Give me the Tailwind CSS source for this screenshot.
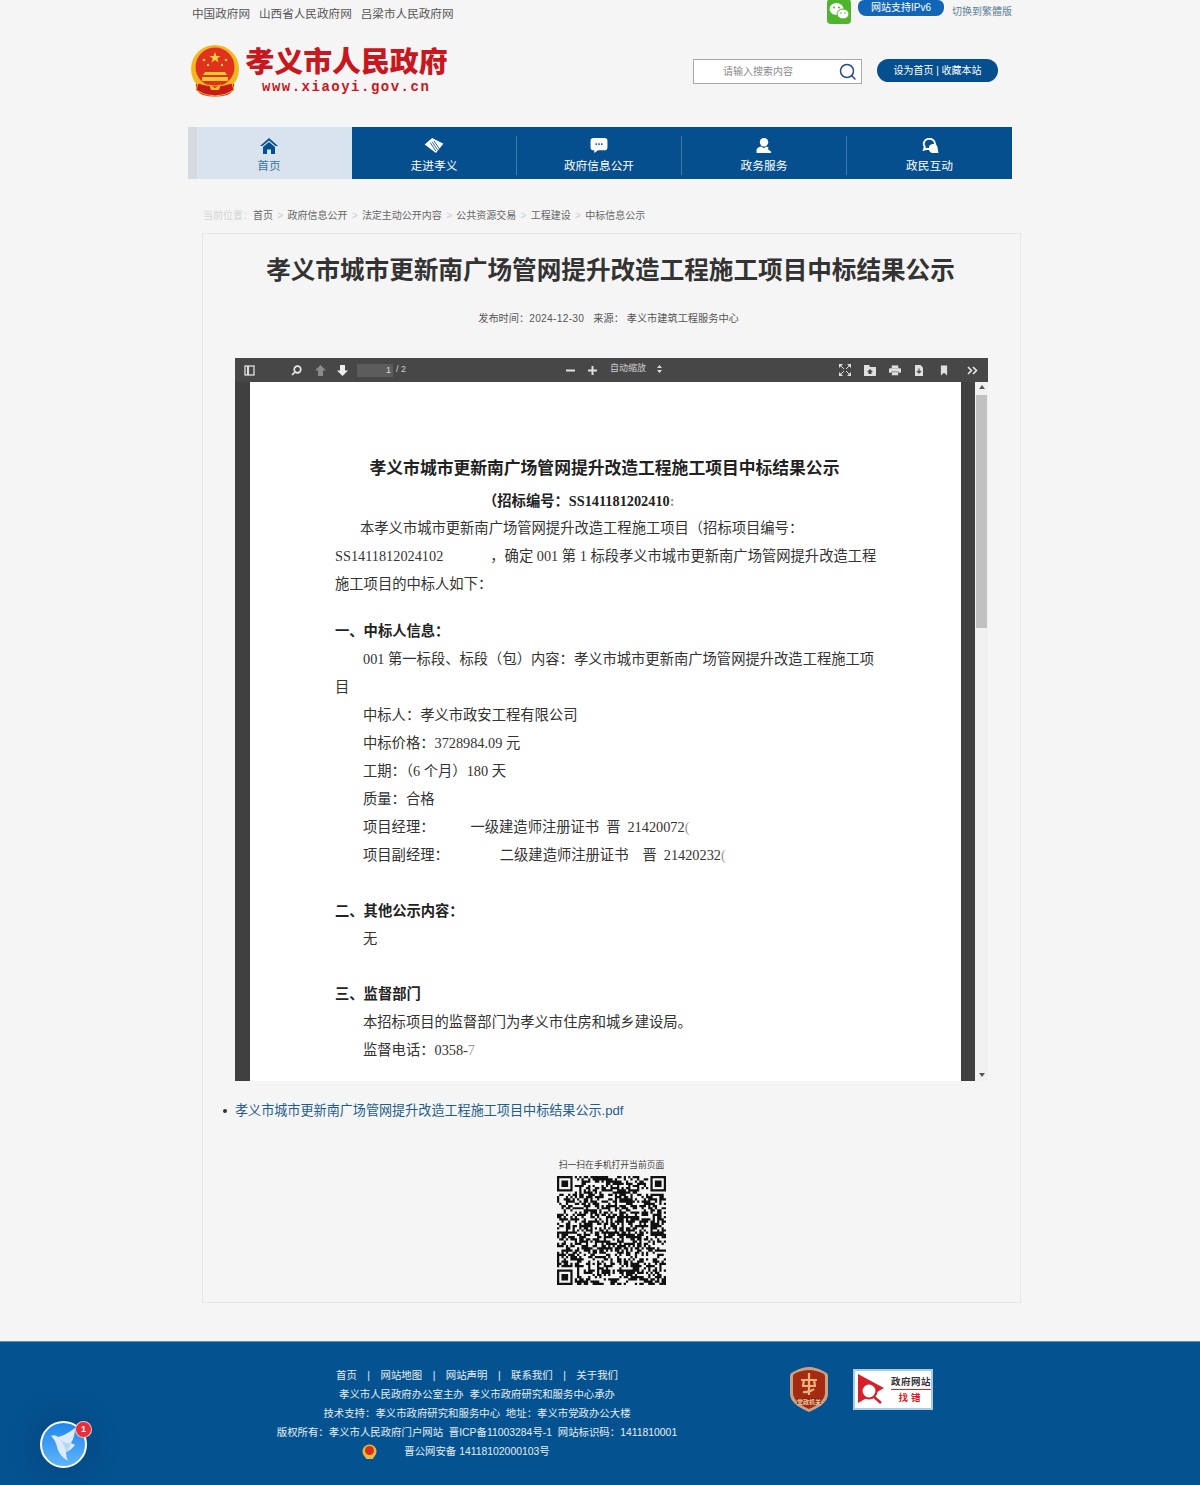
<!DOCTYPE html>
<html lang="zh-CN">
<head>
    <meta charset="UTF-8">
    <title>孝义市人民政府</title>
    <script src="https://cdn.jsdelivr.net/npm/@tailwindcss/browser@4"></script>
</head>
<body class="relative bg-[#f5f5f5] h-[1485px] overflow-hidden font-['Liberation_Sans','Noto_Sans_CJK_SC',sans-serif]">

    <!-- 顶部 -->
    <header class="w-[824px] ml-[188px]">
        <div class="h-[45px] flex items-start">
            <div class="flex gap-[9px] pl-[4px] pt-[6px] text-[11.6px] leading-[16px] text-[#555]">
                <a>中国政府网</a><a>山西省人民政府网</a><a>吕梁市人民政府网</a>
            </div>
            <svg class="ml-auto w-[24px] h-[25px] -mt-px" viewBox="0 0 24 25">
                <rect width="24" height="25" rx="4" fill="#4fb52c"/>
                <ellipse cx="9.5" cy="10" rx="7" ry="6" fill="#fff"/>
                <ellipse cx="16" cy="15" rx="6" ry="5" fill="#fff" stroke="#4fb52c"/>
                <circle cx="7" cy="8.5" r="1" fill="#4fb52c"/><circle cx="12" cy="8.5" r="1" fill="#4fb52c"/>
                <circle cx="14" cy="14" r=".8" fill="#4fb52c"/><circle cx="18" cy="14" r=".8" fill="#4fb52c"/>
            </svg>
            <div class="ml-[7px] w-[86px] h-[16px] rounded-b-[8px] rounded-t-[6px] bg-[#1266b8] text-white text-[10px] leading-[16px] text-center">网站支持IPv6</div>
            <a class="ml-[8px] pt-[5px] text-[10px] leading-[14px] text-[#5d7f97]">切换到繁體版</a>
        </div>

        <div class="h-[82px] flex items-start">
            <svg class="ml-[3px] w-[48px] h-[52px]" viewBox="0 0 48 52">
                <path d="M6 34 Q2 46 12 50 Q24 53 36 50 Q46 46 42 34Z" fill="#c8191c"/>
                <circle cx="24" cy="24" r="24" fill="#f2b91f"/>
                <circle cx="24" cy="22" r="19.5" fill="#e0311f"/>
                <path d="M24 7l1.5 4h4l-3.2 2.4 1.2 4-3.5-2.5-3.5 2.5 1.2-4L18.500 11h4z" fill="#f7d23a"/>
                <circle cx="13" cy="15" r="1.300" fill="#f7d23a"/><circle cx="35" cy="15" r="1.300" fill="#f7d23a"/>
                <circle cx="17" cy="20" r="1.200" fill="#f7d23a"/><circle cx="31" cy="20" r="1.200" fill="#f7d23a"/>
                <path d="M14 27h20l2 3H12zM11 32h26v4H11z" fill="#f7c92e"/>
                <path d="M7 38q8 3 17 3t17-3l2 7q-9 6-19 6t-19-6z" fill="#c8191c" stroke="#f2b91f"/>
                <path d="M18 39l6 4 6-4-2 6h-8z" fill="#f2b91f"/>
            </svg>
            <div class="ml-[6px] text-center">
                <div class="w-[203px] text-[28.9px] leading-[36px] font-black whitespace-nowrap text-[#c9171e] -mt-[1px]">孝义市人民政府</div>
                <div class="pl-[17px] text-left text-[14px] leading-[14px] font-bold tracking-[1.5px] whitespace-nowrap text-[#c9171e] font-['Liberation_Mono',monospace]">www.xiaoyi.gov.cn</div>
            </div>
            <div class="ml-auto mr-[150px] mt-[14px] w-[169px] h-[25px] bg-white border border-[#a9a9a9] flex items-center">
                <span class="ml-[29px] text-[10px] text-[#8a8a8a]">请输入搜索内容</span>
                <svg class="ml-auto mr-[5px] w-[17px] h-[17px]" viewBox="0 0 17 17" fill="none" stroke="#2b4a86" stroke-width="1.500">
                    <circle cx="8" cy="8" r="6.500"/><path d="M12.500 12.500l3.500 3.500" stroke-linecap="round"/>
                </svg>
            </div>
        </div>
    </header>

    <!-- 顶部右侧按钮 -->
    <div class="absolute left-[877px] top-[59px] w-[121px] h-[23px] rounded-full bg-[#064f8e] text-white text-[10px] leading-[23px] text-center">设为首页 | 收藏本站</div>

    <!-- 导航 -->
    <nav class="w-[824px] ml-[188px] h-[52px] flex text-[11.7px]">
        <div class="w-[164px] bg-[#d8e3ed] border-l-[9px] border-[#d6d9dd] flex flex-col items-center text-[#3d76a5] pr-[11px]">
            <svg class="mt-[11px] w-[18px] h-[16px]" viewBox="0 0 18 16" fill="#064f8e">
                <path d="M9 0L0 8h2.500L9 2.500 15.500 8H18z"/><path d="M3 9l6-5 6 5v7h-4v-4.500H7V16H3z"/>
            </svg>
            <span class="mt-[3px] leading-[18px]">首页</span>
        </div>
        <div class="flex-1 bg-[#064f8e] flex text-white">
            <div class="w-[165px] flex flex-col items-center border-r border-[#3f7aa9] mt-[9px] mb-[4px]">
                <svg class="mt-[2px] w-[20px] h-[16px]" viewBox="0 0 20 16" fill="#fff">
                    <path d="M8 0l12 6-8 10L0 7z"/><path d="M8 4l6 9M10 3l6 9M6 5l6 9" stroke="#064f8e" stroke-width=".9"/>
                </svg>
                <span class="mt-[4px] leading-[18px]">走进孝义</span>
            </div>
            <div class="w-[165px] flex flex-col items-center border-r border-[#3f7aa9] mt-[9px] mb-[4px]">
                <svg class="mt-[2px] w-[18px] h-[16px]" viewBox="0 0 18 16" fill="#fff">
                    <path d="M3 0h12a3 3 0 013 3v7a3 3 0 01-3 3H8l-4 3v-3H3a3 3 0 01-3-3V3a3 3 0 013-3z"/>
                    <circle cx="6" cy="6.500" r="1" fill="#064f8e"/><circle cx="9" cy="6.500" r="1" fill="#064f8e"/><circle cx="12" cy="6.500" r="1" fill="#064f8e"/>
                </svg>
                <span class="mt-[4px] leading-[18px]">政府信息公开</span>
            </div>
            <div class="w-[165px] flex flex-col items-center border-r border-[#3f7aa9] mt-[9px] mb-[4px]">
                <svg class="mt-[2px] w-[17px] h-[16px]" viewBox="0 0 17 16" fill="#fff">
                    <circle cx="8" cy="4.500" r="4.500"/><path d="M0 16v-3q0-3 5-4l3 2 2-2q2 .3 3 1l-4 6z"/><path d="M11 11l5 4-1 1h-6z"/>
                </svg>
                <span class="mt-[4px] leading-[18px]">政务服务</span>
            </div>
            <div class="flex-1 flex flex-col items-center mt-[9px] mb-[4px]">
                <svg class="mt-[2px] w-[18px] h-[16px]" viewBox="0 0 18 16">
                    <path d="M2.500 12.500l1-3a6 5.500 0 1 1 3 2z" fill="none" stroke="#fff" stroke-width="2"/>
                    <path d="M8 11a4.500 4 0 0 1 9-1l1 6h-7a4.500 4.500 0 0 1-3-5z" fill="#fff"/>
                </svg>
                <span class="mt-[4px] leading-[18px]">政民互动</span>
            </div>
        </div>
    </nav>

    <!-- 面包屑 -->
    <div class="ml-[203px] mt-[29px] h-[16px] flex items-center text-[10px] leading-[16px] text-[#666] whitespace-nowrap">
        <span class="text-[#d4d4d4]">当前位置：</span>
        <a>首页</a><span class="mx-[4.3px] text-[#ccc]">&gt;</span>
        <a>政府信息公开</a><span class="mx-[4.3px] text-[#ccc]">&gt;</span>
        <a>法定主动公开内容</a><span class="mx-[4.3px] text-[#ccc]">&gt;</span>
        <a>公共资源交易</a><span class="mx-[4.3px] text-[#ccc]">&gt;</span>
        <a>工程建设</a><span class="mx-[4.3px] text-[#ccc]">&gt;</span>
        <a>中标信息公示</a>
    </div>

    <!-- 正文 -->
    <main class="ml-[202px] mt-[9px] w-[819px] h-[1070px] border border-[#e6e6e6]">
        <h1 class="mt-[19px] pr-[2px] text-center text-[24.6px] leading-[36px] font-bold text-[#333] whitespace-nowrap">孝义市城市更新南广场管网提升改造工程施工项目中标结果公示</h1>
        <div class="mt-[22px] pr-[6px] h-[16px] flex justify-center gap-[9px] text-[10.2px] leading-[16px] text-[#555] whitespace-nowrap">
            <span>发布时间：<span class="tracking-[0.3px]">2024-12-30</span></span><span>来源：&nbsp;孝义市建筑工程服务中心</span>
        </div>

        <!-- PDF 预览 -->
        <section class="ml-[32px] mt-[31px] w-[753px] h-[723px] flex flex-col">
            <div class="h-[24px] bg-[#474747] flex items-center text-[#d0d0d0] text-[9px] shrink-0">
                <svg class="ml-[9px] w-[11px] h-[11px]" viewBox="0 0 11 11" fill="none" stroke="#e0e0e0" stroke-width="1.300"><rect x="1" y="1" width="9" height="9"/><path d="M4 1v9" stroke-width="2"/></svg>
                <svg class="ml-[36px] w-[11px] h-[11px]" viewBox="0 0 11 11" fill="none" stroke="#e8e8e8" stroke-width="1.700"><circle cx="6.500" cy="4.500" r="3.300"/><path d="M4 7l-3 3"/></svg>
                <svg class="ml-[13px] w-[11px] h-[11px]" viewBox="0 0 11 11" fill="#8a8a8a"><path d="M5.500 0L11 5.500H8V11H3V5.500H0z"/></svg>
                <svg class="ml-[11px] w-[11px] h-[11px]" viewBox="0 0 11 11" fill="#eee"><path d="M5.500 11L11 5.500H8V0H3v5.500H0z"/></svg>
                <div class="ml-[9px] w-[36px] h-[13px] bg-[#5c5c5c] text-right pr-[2px] leading-[13px] text-[#ddd]">1</div>
                <span class="ml-[3px]">/ 2</span>
                <svg class="ml-[160px] w-[9px] h-[9px]" viewBox="0 0 9 9" fill="#e0e0e0"><rect y="3.500" width="9" height="2"/></svg>
                <svg class="ml-[13px] w-[9px] h-[9px]" viewBox="0 0 9 9" fill="#e0e0e0"><rect y="3.500" width="9" height="2"/><rect x="3.500" width="2" height="9"/></svg>
                <span class="ml-[13px] -mt-[2px]">自动缩放</span>
                <svg class="ml-[11px] w-[5px] h-[8px] -mt-[2px]" viewBox="0 0 5 8" fill="#ddd"><path d="M2.500 0L5 3H0zM2.500 8L0 5h5z"/></svg>
                <svg class="ml-[177px] w-[12px] h-[12px]" viewBox="0 0 12 12" fill="#e0e0e0"><path d="M0 0h4L0 4zM12 0v4L8 0zM0 12V8l4 4zM12 12H8l4-4z"/><path d="M2 2l3 3M10 2L7 5M2 10l3-3M10 10L7 7" stroke="#e0e0e0"/></svg>
                <svg class="ml-[13px] w-[12px] h-[11px]" viewBox="0 0 12 11" fill="#e0e0e0"><path d="M0 2V0h5l1 2h6v9H0z"/><path d="M6 4l3 3H7.500v2h-3V7H3z" fill="#474747"/></svg>
                <svg class="ml-[13px] w-[12px] h-[11px]" viewBox="0 0 13 11" fill="#e0e0e0"><rect x="3" width="7" height="3"/><rect y="3" width="13" height="5" rx="1"/><rect x="3" y="7" width="7" height="4" stroke="#474747" stroke-width=".6"/></svg>
                <svg class="ml-[14px] w-[8px] h-[11px]" viewBox="0 0 8 11" fill="#e0e0e0"><path d="M0 0h5.500L8 2.500V11H0z"/><path d="M4 3.500v4M2 6l2 2 2-2" stroke="#474747" fill="none" stroke-width="1.200"/></svg>
                <svg class="ml-[17px] w-[8px] h-[11px]" viewBox="0 0 9 11" fill="#e0e0e0"><path d="M1 0h7v11L4.500 8 1 11z"/></svg>
                <svg class="ml-[19px] w-[11px] h-[9px]" viewBox="0 0 11 9" fill="none" stroke="#e8e8e8" stroke-width="1.600"><path d="M1 1l3.500 3.500L1 8M6 1l3.500 3.500L6 8"/></svg>
            </div>
            <div class="flex-1 flex min-h-0">
                <div class="flex-1 min-w-0 bg-[#404040] px-[15px]">
                    <div class="w-[711px] h-full overflow-hidden bg-white pl-[85px] pt-[73px] text-[14.3px] leading-[28px] text-[#333] whitespace-nowrap font-['Liberation_Serif','Noto_Sans_CJK_SC',serif]">
                        <div class="-ml-[85px] pr-[2px] text-center text-[16.8px] leading-[28px] font-bold text-[#222]">孝义市城市更新南广场管网提升改造工程施工项目中标结果公示</div>
                        <div class="mt-[4px] ml-[148px] font-bold text-[#222]">（招标编号：SS141181202410<span class="text-[#999]">:</span></div>
                        <div class="-mt-[1px] ml-[25px]">本孝义市城市更新南广场管网提升改造工程施工项目（招标项目编号：</div>
                        <div>SS1411812024102<span class="inline-block w-[47px]"></span>，确定 001 第 1 标段孝义市城市更新南广场管网提升改造工程</div>
                        <div>施工项目的中标人如下：</div>
                        <div class="mt-[19px] font-bold text-[#222]">一、中标人信息：</div>
                        <div class="ml-[28px]">001 第一标段、标段（包）内容：孝义市城市更新南广场管网提升改造工程施工项</div>
                        <div>目</div>
                        <div class="ml-[28px]">中标人：孝义市政安工程有限公司</div>
                        <div class="ml-[28px]">中标价格：3728984.09 元</div>
                        <div class="ml-[28px]">工期：（6 个月）180 天</div>
                        <div class="ml-[28px]">质量：合格</div>
                        <div class="ml-[28px]">项目经理：<span class="inline-block w-[36px]"></span>一级建造师注册证书<span class="ml-[7px]">晋</span><span class="ml-[7px]">21420072</span><span class="text-[#999]">(</span></div>
                        <div class="ml-[28px]">项目副经理：<span class="inline-block w-[51px]"></span>二级建造师注册证书<span class="ml-[14px]">晋</span><span class="ml-[7px]">21420232</span><span class="text-[#999]">(</span></div>
                        <div class="mt-[28px] font-bold text-[#222]">二、其他公示内容：</div>
                        <div class="ml-[28px]">无</div>
                        <div class="mt-[27px] font-bold text-[#222]">三、监督部门</div>
                        <div class="ml-[28px]">本招标项目的监督部门为孝义市住房和城乡建设局。</div>
                        <div class="ml-[28px]">监督电话：0358-<span class="text-[#999]">7</span></div>
                    </div>
                </div>
                <div class="w-[13px] bg-[#f1f1f1] flex flex-col items-center shrink-0">
                    <svg class="mt-[3px] w-[6px] h-[4px]" viewBox="0 0 6 4" fill="#555"><path d="M3 0l3 4H0z"/></svg>
                    <div class="mt-[6px] w-[11px] h-[233px] bg-[#c1c1c1]"></div>
                    <svg class="mt-auto mb-[4px] w-[6px] h-[4px]" viewBox="0 0 6 4" fill="#555"><path d="M3 4L0 0h6z"/></svg>
                </div>
            </div>
        </section>

        <!-- 附件 -->
        <div class="mt-[20px] flex items-center h-[20px] text-[13.1px] text-[#1f5d8c] whitespace-nowrap">
            <span class="ml-[20px] mr-[8px] w-[4px] h-[4px] rounded-full bg-[#333]"></span>
            <a>孝义市城市更新南广场管网提升改造工程施工项目中标结果公示.pdf</a>
        </div>

        <!-- 二维码 -->
        <div class="mt-[36px] flex flex-col items-center">
            <div class="text-[8.8px] leading-[16px] text-[#444]">扫一扫在手机打开当前页面</div>
            <svg id="qr" class="mt-[3px] w-[109px] h-[109px]" viewBox="0 0 49 49"></svg>
        </div>
    </main>

    <!-- 页脚 -->
    <footer class="mt-[38px] h-[145px] bg-[#04528f] border-t border-[#5f8fb5]">
        <div class="w-[824px] ml-[188px] flex">
            <div class="w-[578px] pt-[24px] text-center text-white/90 text-[10.4px] leading-[19px] whitespace-nowrap">
                <div class="flex justify-center gap-[10.5px]">
                    <a>首页</a><span>|</span><a>网站地图</a><span>|</span><a>网站声明</a><span>|</span><a>联系我们</a><span>|</span><a>关于我们</a>
                </div>
                <div>孝义市人民政府办公室主办&nbsp;&nbsp;孝义市政府研究和服务中心承办</div>
                <div>技术支持：孝义市政府研究和服务中心&nbsp;&nbsp;地址：孝义市党政办公大楼</div>
                <div>版权所有：孝义市人民政府门户网站&nbsp;&nbsp;晋ICP备11003284号-1&nbsp;&nbsp;网站标识码：1411810001</div>
                <div class="flex justify-center items-center pr-[42px]">
                    <svg class="mr-[27px] w-[15px] h-[16px]" viewBox="0 0 15 16">
                        <circle cx="7.500" cy="7.500" r="7" fill="#f0b92a"/><circle cx="7.500" cy="6.500" r="4.500" fill="#d8301e"/><path d="M3 12h9l-1 3H4z" fill="#e8b94a"/>
                    </svg>
                    <span>晋公网安备 14118102000103号</span>
                </div>
            </div>
            <svg class="ml-[24px] mt-[25px] w-[38px] h-[45px]" viewBox="0 0 38 45">
                <path d="M3 5Q12 0 19 0t16 5q3 1 3 4v18q0 10-19 18Q0 37 0 27V9q0-3 3-4z" fill="#c9a184"/>
                <path d="M4 7q8-4 15-4t15 4q1 1 1 3v16q0 9-16 16Q3 35 3 26V10q0-2 1-3z" fill="#a42b12"/>
                <path d="M19 6v22M11 13h16M12 19h14M14 13l-1 6M24 13l1 6M13 25q6 1 11-3" fill="none" stroke="#efb27c" stroke-width="2.200"/>
                <rect x="7" y="31" width="24" height="6" fill="#8a2410"/>
                <text x="19" y="36.500" text-anchor="middle" font-size="6" font-weight="700" fill="#f1c9a0">党政机关</text>
            </svg>
            <div class="ml-[25px] mt-[27px] w-[80px] h-[41px] bg-white border-2 border-[#a8cbe6] flex relative">
                <svg class="w-[36px] h-[37px] shrink-0" viewBox="0 0 36 37">
                    <path d="M3 3l26 14-26 15z" fill="#d6212a"/>
                    <circle cx="14" cy="20" r="7.500" fill="#fff" stroke="#d6212a" stroke-width="2.200"/>
                    <path d="M19 26l7 6" stroke="#d6212a" stroke-width="2.500"/>
                </svg>
                <div class="w-[40px] text-center leading-none">
                    <div class="mt-[6px] pb-[2px] border-b border-[#d6212a] text-[9.500px] font-bold tracking-[0.5px] text-[#333] whitespace-nowrap">政府网站</div>
                    <div class="mt-[3px] text-[9.500px] font-bold tracking-[3px] text-[#d6212a]">找错</div>
                </div>
            </div>
        </div>
    </footer>

    <!-- 悬浮图标 -->
    <div class="absolute left-[40px] top-[1421px] w-[47px] h-[47px] rounded-full bg-gradient-to-b from-[#1c86ec] to-[#5db5f8] border-2 border-white shadow-[0_0_30px_rgba(0,40,90,0.35)]">
        <svg class="w-full h-full" viewBox="0 0 43 43">
            <path d="M9 13Q13 11 16 14 24 12 33 5 33 14 29 20L33 22Q28 28 24 29 24 34 26 38 17 33 15 24 14 18 9 13z" fill="#dcebf9"/>
            <path d="M16 14q6 6 8 15 3-1 5-9-6 2-13-6z" fill="#b7d8f4"/>
        </svg>
        <span class="absolute -top-[2px] left-[33px] w-[17px] h-[17px] rounded-full bg-[#e5303a] border border-white/70 text-white text-[9px] leading-[15px] font-bold text-center">1</span>
    </div>

    <script>
        // 二维码只是示意，图形用固定种子生成
        const size = 49;
        let seed = 20241230;
        const rnd = () => {
            seed = (seed * 1664525 + 1013904223) % 4294967296;
            return ((seed >>> 11) % 1000) / 1000;
        };
        const inFinder = (x, y) => (x < 8 && y < 8) || (x >= size - 8 && y < 8) || (x < 8 && y >= size - 8);
        let d = '';
        for (let y = 0; y < size; y++) {
            for (let x = 0; x < size; x++) {
                if (!inFinder(x, y) && rnd() > 0.48) d += `M${x} ${y}h1v1h-1z`;
            }
        }
        for (const [fx, fy] of [[0, 0], [size - 7, 0], [0, size - 7]]) {
            d += `M${fx} ${fy}h7v1h-7zM${fx} ${fy + 6}h7v1h-7zM${fx} ${fy + 1}h1v5h-1zM${fx + 6} ${fy + 1}h1v5h-1zM${fx + 2} ${fy + 2}h3v3h-3z`;
        }
        document.getElementById('qr').innerHTML = `<path d="${d}" fill="#111"/>`;
    </script>
</body>
</html>
